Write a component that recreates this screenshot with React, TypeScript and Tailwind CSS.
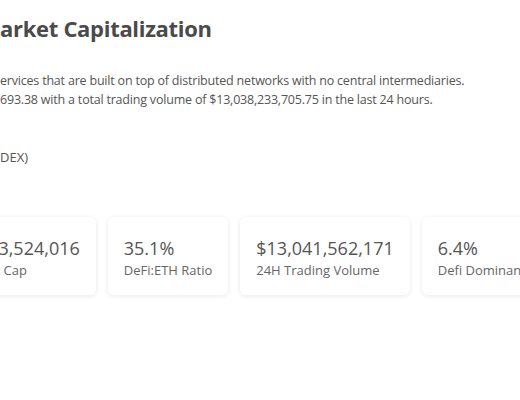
import React from "react";

function Clipped({ hidden, shown, className }: { hidden: string; shown: string; className: string }) {
  return (
    <div className={"-ml-[300px] whitespace-nowrap " + className}>
      <span className="inline-block w-[300px] text-right">{hidden}</span>
      {shown}
    </div>
  );
}

function Card({ value, label }: { value: string; label: string }) {
  return (
    <div className="shrink-0 rounded-md bg-white px-4 pt-[18px] pb-[15px] shadow-[0_1px_5px_rgba(0,0,0,0.09)]">
      <div className="whitespace-nowrap text-[18px] leading-[26px] text-[#555555]">{value}</div>
      <div className="whitespace-nowrap text-[13px] leading-[19px] text-[#666666]">{label}</div>
    </div>
  );
}

export default function App() {
  return (
    <div className="h-[400px] w-[520px] overflow-hidden bg-white font-['Open_Sans',sans-serif]">
      <div className="pt-[13px]">
        <Clipped
          hidden="DeFi M"
          shown="arket Capitalization"
          className="text-[22px] font-bold leading-[30px] tracking-[-0.3px] text-[#4a4a4a]"
        />
        <div className="mt-[28px] text-[12.5px] leading-[19px] tracking-[-0.2px] text-[#555555]">
          <Clipped
            hidden="DeFi refers to financial s"
            shown="ervices that are built on top of distributed networks with no central intermediaries."
            className=""
          />
          <Clipped
            hidden="The DeFi market cap is $89,521,"
            shown="693.38 with a total trading volume of $13,038,233,705.75 in the last 24 hours."
            className=""
          />
        </div>
        <div className="mt-[39px] text-[13px] leading-[19px] text-[#555555]">
          <Clipped hidden="Decentralized Exchange (" shown="DEX)" className="" />
        </div>
        <div className="-ml-[84px] mt-[50px] flex gap-3">
          <Card value="$108,393,524,016" label="Net Market Cap" />
          <Card value="35.1%" label="DeFi:ETH Ratio" />
          <Card value="$13,041,562,171" label="24H Trading Volume" />
          <Card value="6.4%" label="Defi Dominance" />
          <Card value="Lido Staked Ether" label="Top Coin" />
        </div>
      </div>
    </div>
  );
}
